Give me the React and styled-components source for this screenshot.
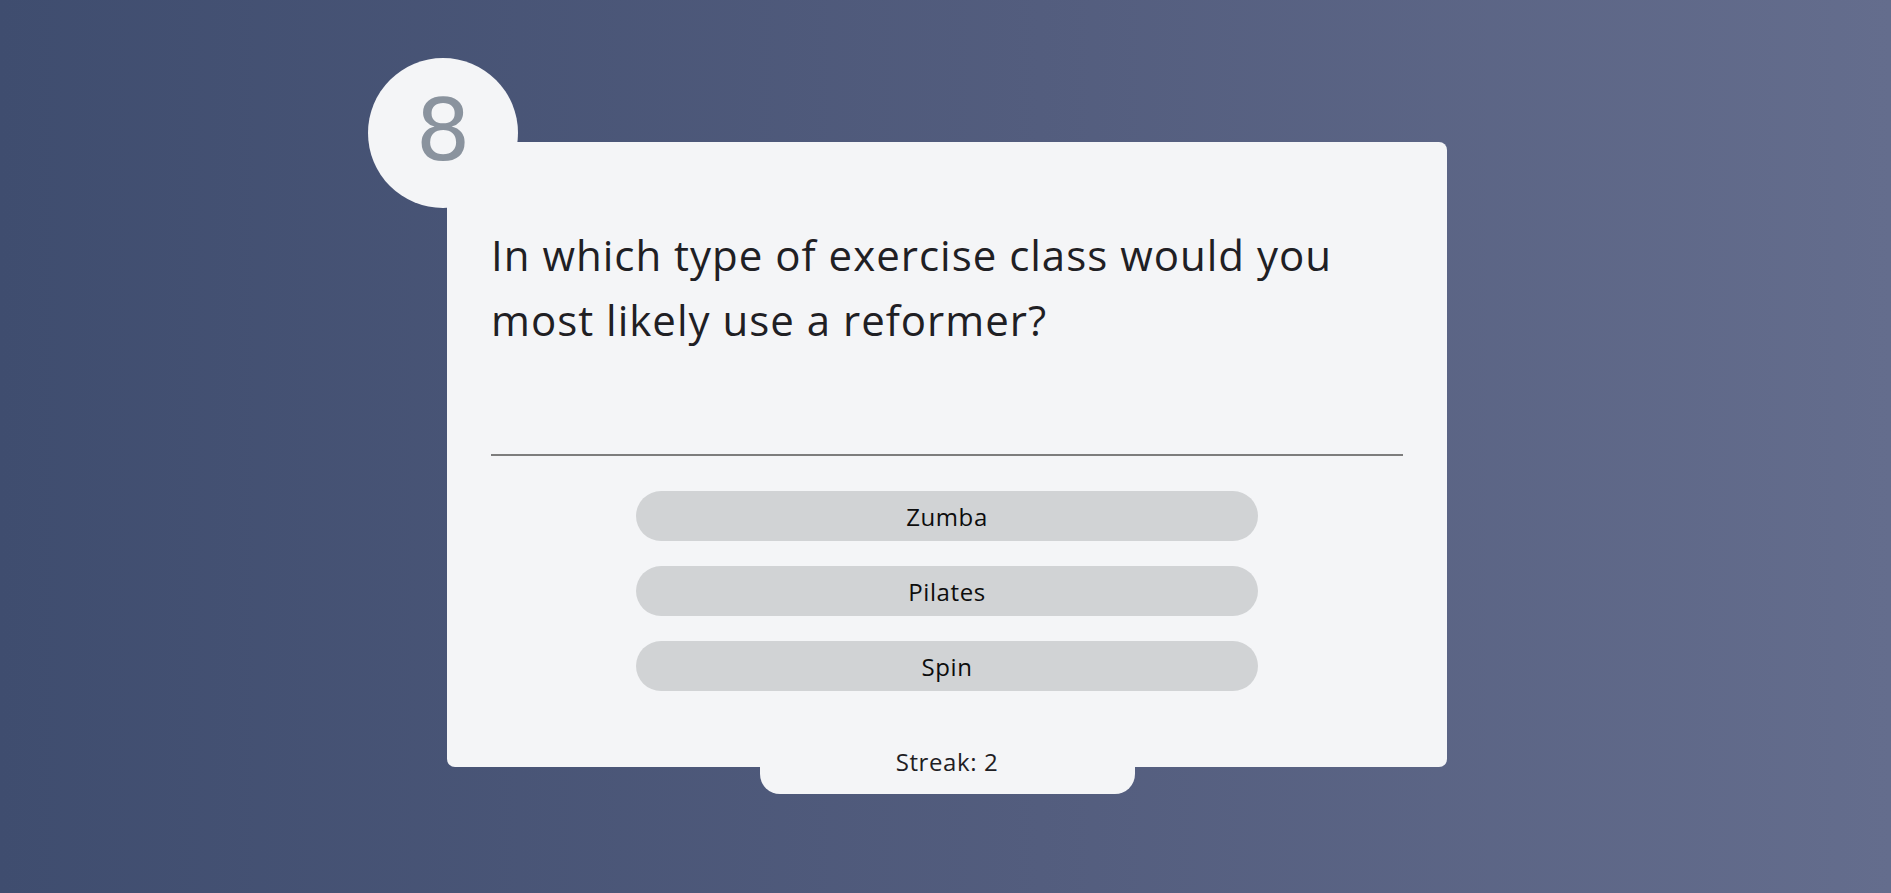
import React from 'react';
import styled, { createGlobalStyle } from 'styled-components';

const GlobalStyle = createGlobalStyle`
  html, body {
    margin: 0;
    padding: 0;
    height: 100%;
  }
  body {
    font-family: "Open Sans", "Noto Sans", sans-serif;
    background: linear-gradient(to right, #3f4d6f 0%, #535d7e 55%, #646d8d 100%);
    min-height: 893px;
  }
`;

const question = {
  number: 8,
  text: 'In which type of exercise class would you most likely use a reformer?',
  answers: ['Zumba', 'Pilates', 'Spin'],
};

function App() {
  return (
    <>
      <GlobalStyle />
      <Page>
        <Card>
          <NumberBadge>{question.number}</NumberBadge>
          <Question>{question.text}</Question>
          <Divider />
          <Answers>
            {question.answers.map((answer) => (
              <AnswerButton key={answer}>{answer}</AnswerButton>
            ))}
          </Answers>
          <Streak>Streak: 2</Streak>
        </Card>
      </Page>
    </>
  );
}

const Page = styled.div`
  display: flex;
  justify-content: center;
  padding-top: 142px;
  padding-left: 3px;
`;

const Card = styled.div`
  position: relative;
  width: 1000px;
  box-sizing: border-box;
  padding: 80px 44px 0;
  background: #f4f5f7;
  border-radius: 8px;
  display: flex;
  flex-direction: column;
`;

const NumberBadge = styled.div`
  position: absolute;
  left: -79px;
  top: -84px;
  width: 150px;
  height: 150px;
  border-radius: 50%;
  background: #f4f5f7;
  color: #8a939e;
  font-family: "DejaVu Sans", "Open Sans", sans-serif;
  font-size: 86px;
  font-weight: 400;
  line-height: 1;
  display: flex;
  align-items: center;
  justify-content: center;
  padding-bottom: 6px;
  box-sizing: border-box;
`;

const Question = styled.h1`
  margin: 0 0 102px;
  max-width: 900px;
  font-size: 42px;
  font-weight: 400;
  letter-spacing: 1px;
  line-height: 65px;
  color: #1f2024;
`;

const Divider = styled.hr`
  margin: 0;
  border: none;
  height: 2px;
  background: #7d7d7d;
`;

const Answers = styled.div`
  display: flex;
  flex-direction: column;
  align-items: center;
  gap: 25px;
  margin-top: 35px;
`;

const AnswerButton = styled.button`
  width: 622px;
  height: 50px;
  border: none;
  border-radius: 25px;
  background: #d1d3d5;
  color: #0d0d0d;
  font-family: inherit;
  font-size: 24px;
  letter-spacing: 0.6px;
  cursor: pointer;
`;

const Streak = styled.div`
  align-self: center;
  width: 375px;
  height: 66px;
  margin-top: 37px;
  margin-bottom: -27px;
  background: #f4f5f7;
  border-radius: 0 0 20px 20px;
  display: flex;
  align-items: center;
  justify-content: center;
  font-size: 24px;
  letter-spacing: 0.6px;
  color: #1f2024;
`;

export default App;
